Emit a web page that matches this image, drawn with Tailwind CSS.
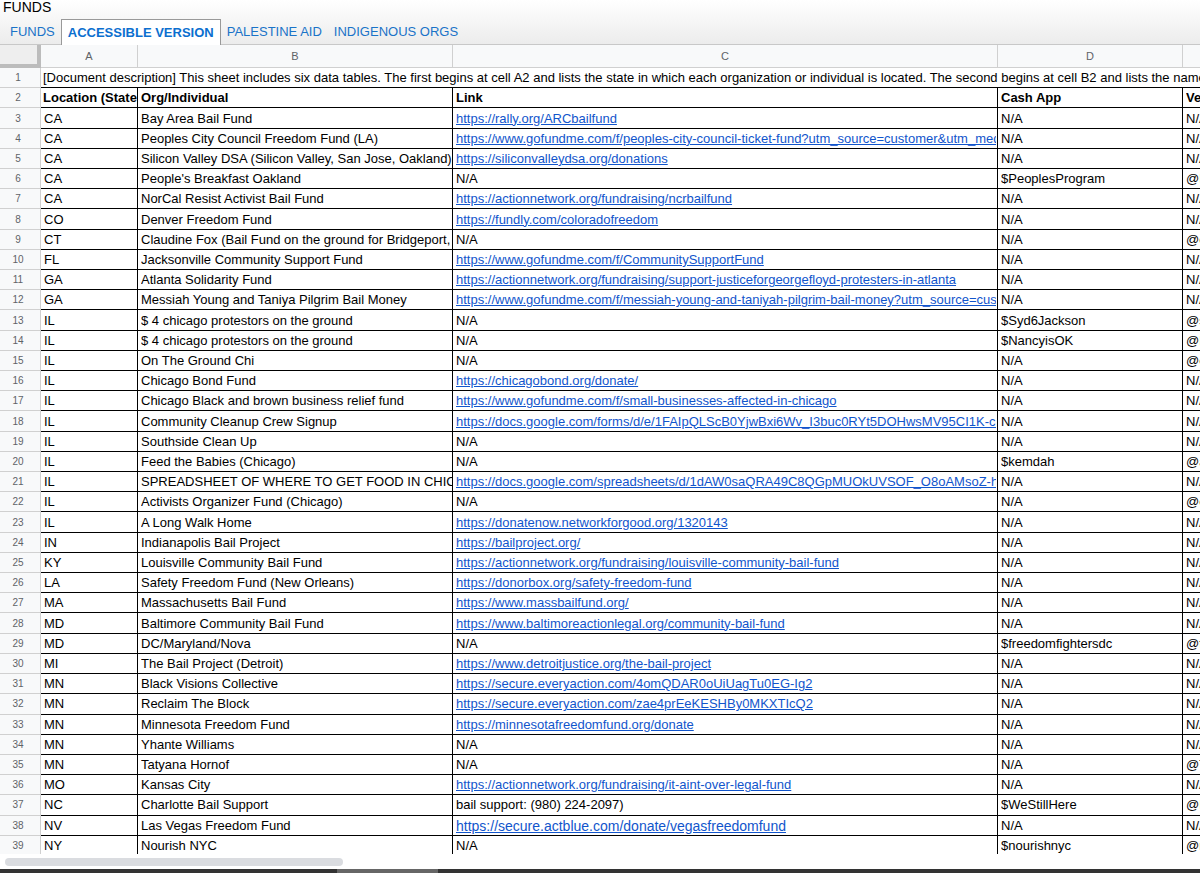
<!DOCTYPE html>
<html lang="en">
<head>
<meta charset="utf-8">
<meta name="viewport" content="width=device-width, initial-scale=1">
<title>FUNDS</title>
<script src="https://cdn.jsdelivr.net/npm/@tailwindcss/browser@4"></script>
</head>
<body class="flex h-screen flex-col overflow-hidden bg-white font-['Liberation_Sans',Arial,sans-serif] text-[13px] leading-4 text-black">
<header class="flex h-[45px] shrink-0 flex-col justify-between border-b border-[#c8c8c8] bg-linear-to-b from-white to-[#ececec]">
  <h1 class="px-[3px] text-[14px] leading-[14px]">FUNDS</h1>
  <nav class="flex h-[25px] items-stretch text-[#1a73c8]" aria-label="Sheets">
    <a href="#funds" class="flex items-center pr-1.5 pl-[10px]">FUNDS</a>
    <a href="#accessible" aria-current="page" class="-mb-px flex items-center border border-b-0 border-[#999] bg-white px-1.5 font-bold text-[#0b6fcf]">ACCESSIBLE VERSION</a>
    <a href="#palestine" class="flex items-center px-1.5">PALESTINE AID</a>
    <a href="#indigenous" class="flex items-center px-1.5">INDIGENOUS ORGS</a>
  </nav>
</header>
<main class="min-h-0 flex-1 overflow-hidden">
  <table class="h-[calc(100%+2px)] w-full table-fixed border-separate border-spacing-0">
    <colgroup>
      <col class="w-[41px]"><col class="w-[97px]"><col class="w-[315px]"><col class="w-[545px]"><col class="w-[185px]"><col>
    </colgroup>
    <thead>
      <tr class="h-[23px] bg-[#f8f9fa] text-[11px] text-[#5f6368]">
        <td class="border-r-4 border-b-4 border-[#bcbcbc] bg-[#eee] p-0"></td>
        <th scope="col" class="border-r border-b border-[#d0d0d0] p-0 font-normal">A</th>
        <th scope="col" class="border-r border-b border-[#d0d0d0] p-0 font-normal">B</th>
        <th scope="col" class="border-r border-b border-[#d0d0d0] p-0 font-normal">C</th>
        <th scope="col" class="border-r border-b border-[#d0d0d0] p-0 font-normal">D</th>
        <th scope="col" class="border-b border-[#d0d0d0] p-0"></th>
      </tr>
    </thead>
    <tbody id="rows"></tbody>
  </table>
</main>
<footer class="flex shrink-0 flex-col">
  <div class="px-[5px] pt-1 pb-[3px]"><div class="h-2 w-[338px] rounded-full bg-[#dadce0]"></div></div>
  <div class="h-1 bg-[#333] pl-[337px]"><div class="h-1 w-[101px] bg-[#666]"></div></div>
</footer>
<script>
const description = '[Document description] This sheet includes six data tables. The first begins at cell A2 and lists the state in which each organization or individual is located. The second begins at cell B2 and lists the names of each';
const data = [
['Location (State','Org/Individual','Link','Cash App','Venmo'],
['CA','Bay Area Bail Fund','https://rally.org/ARCbailfund','N/A','N/A'],
['CA','Peoples City Council Freedom Fund (LA)','https://www.gofundme.com/f/peoples-city-council-ticket-fund?utm_source=customer&utm_medium','N/A','N/A'],
['CA','Silicon Valley DSA (Silicon Valley, San Jose, Oakland)','https://siliconvalleydsa.org/donations','N/A','N/A'],
['CA',"People's Breakfast Oakland",'N/A','$PeoplesProgram','@P'],
['CA','NorCal Resist Activist Bail Fund','https://actionnetwork.org/fundraising/ncrbailfund','N/A','N/A'],
['CO','Denver Freedom Fund','https://fundly.com/coloradofreedom','N/A','N/A'],
['CT','Claudine Fox (Bail Fund on the ground for Bridgeport, CT)','N/A','N/A','@c'],
['FL','Jacksonville Community Support Fund','https://www.gofundme.com/f/CommunitySupportFund','N/A','N/A'],
['GA','Atlanta Solidarity Fund','https://actionnetwork.org/fundraising/support-justiceforgeorgefloyd-protesters-in-atlanta','N/A','N/A'],
['GA','Messiah Young and Taniya Pilgrim Bail Money','https://www.gofundme.com/f/messiah-young-and-taniyah-pilgrim-bail-money?utm_source=customer','N/A','N/A'],
['IL','$ 4 chicago protestors on the ground','N/A','$Syd6Jackson','@s'],
['IL','$ 4 chicago protestors on the ground','N/A','$NancyisOK','@N'],
['IL','On The Ground Chi','N/A','N/A','@o'],
['IL','Chicago Bond Fund','https://chicagobond.org/donate/','N/A','N/A'],
['IL','Chicago Black and brown business relief fund','https://www.gofundme.com/f/small-businesses-affected-in-chicago','N/A','N/A'],
['IL','Community Cleanup Crew Signup','https://docs.google.com/forms/d/e/1FAIpQLScB0YjwBxi6Wv_I3buc0RYt5DOHwsMV95CI1K-c1-g','N/A','N/A'],
['IL','Southside Clean Up','N/A','N/A','N/A'],
['IL','Feed the Babies (Chicago)','N/A','$kemdah','@a'],
['IL','SPREADSHEET OF WHERE TO GET FOOD IN CHICAGO','https://docs.google.com/spreadsheets/d/1dAW0saQRA49C8QGpMUOkUVSOF_O8oAMsoZ-hE','N/A','N/A'],
['IL','Activists Organizer Fund (Chicago)','N/A','N/A','@c'],
['IL','A Long Walk Home','https://donatenow.networkforgood.org/1320143','N/A','N/A'],
['IN','Indianapolis Bail Project','https://bailproject.org/','N/A','N/A'],
['KY','Louisville Community Bail Fund','https://actionnetwork.org/fundraising/louisville-community-bail-fund','N/A','N/A'],
['LA','Safety Freedom Fund (New Orleans)','https://donorbox.org/safety-freedom-fund','N/A','N/A'],
['MA','Massachusetts Bail Fund','https://www.massbailfund.org/','N/A','N/A'],
['MD','Baltimore Community Bail Fund','https://www.baltimoreactionlegal.org/community-bail-fund','N/A','N/A'],
['MD','DC/Maryland/Nova','N/A','$freedomfightersdc','@f'],
['MI','The Bail Project (Detroit)','https://www.detroitjustice.org/the-bail-project','N/A','N/A'],
['MN','Black Visions Collective','https://secure.everyaction.com/4omQDAR0oUiUagTu0EG-Ig2','N/A','N/A'],
['MN','Reclaim The Block','https://secure.everyaction.com/zae4prEeKESHBy0MKXTIcQ2','N/A','N/A'],
['MN','Minnesota Freedom Fund','https://minnesotafreedomfund.org/donate','N/A','N/A'],
['MN','Yhante Williams','N/A','N/A','N/A'],
['MN','Tatyana Hornof','N/A','N/A','@T'],
['MO','Kansas City','https://actionnetwork.org/fundraising/it-aint-over-legal-fund','N/A','N/A'],
['NC','Charlotte Bail Support','bail support: (980) 224-2097)','$WeStillHere','@B'],
['NV','Las Vegas Freedom Fund','https://secure.actblue.com/donate/vegasfreedomfund','N/A','N/A'],
['NY','Nourish NYC','N/A','$nourishnyc','@n'],
];
const tbody = document.getElementById('rows');
function rowHeader(tr, n) {
  const th = document.createElement('th');
  th.scope = 'row';
  th.className = 'border-r border-b border-[#d0d0d0] bg-[#f8f9fa] p-0 pt-px pr-1 text-[10px] leading-4 font-normal text-[#5f6368]';
  th.textContent = n;
  tr.append(th);
}
const first = document.createElement('tr');
rowHeader(first, 1);
const desc = document.createElement('td');
desc.colSpan = 5;
desc.className = 'overflow-hidden border-b border-black p-0 pt-px pl-0.5 whitespace-nowrap';
desc.textContent = description;
first.append(desc);
tbody.append(first);
data.forEach((row, i) => {
  const tr = document.createElement('tr');
  rowHeader(tr, i + 2);
  const last = i === data.length - 1;
  row.forEach((text, c) => {
    const td = document.createElement(i === 0 ? 'th' : 'td');
    if (i === 0) td.scope = 'col';
    td.className = 'border-black p-0 pt-px text-left';
    td.classList.add(c < 4 ? 'border-r' : 'border-r-0');
    td.classList.add(last ? 'border-b-0' : 'border-b');
    td.classList.add(i === 0 && c === 0 ? 'pl-0.5' : 'pl-[3px]');
    const isLink = text.startsWith('https');
    const box = document.createElement(isLink ? 'a' : 'div');
    box.className = 'block overflow-hidden whitespace-nowrap';
    if (isLink) {
      box.href = text;
      box.classList.add('text-[#1155cc]', 'underline', 'mr-px');
      if (text.includes('actblue')) box.classList.add('text-[14px]', 'leading-4');
    }
    box.textContent = text;
    td.append(box);
    tr.append(td);
  });
  tbody.append(tr);
});
</script>
</body>
</html>
